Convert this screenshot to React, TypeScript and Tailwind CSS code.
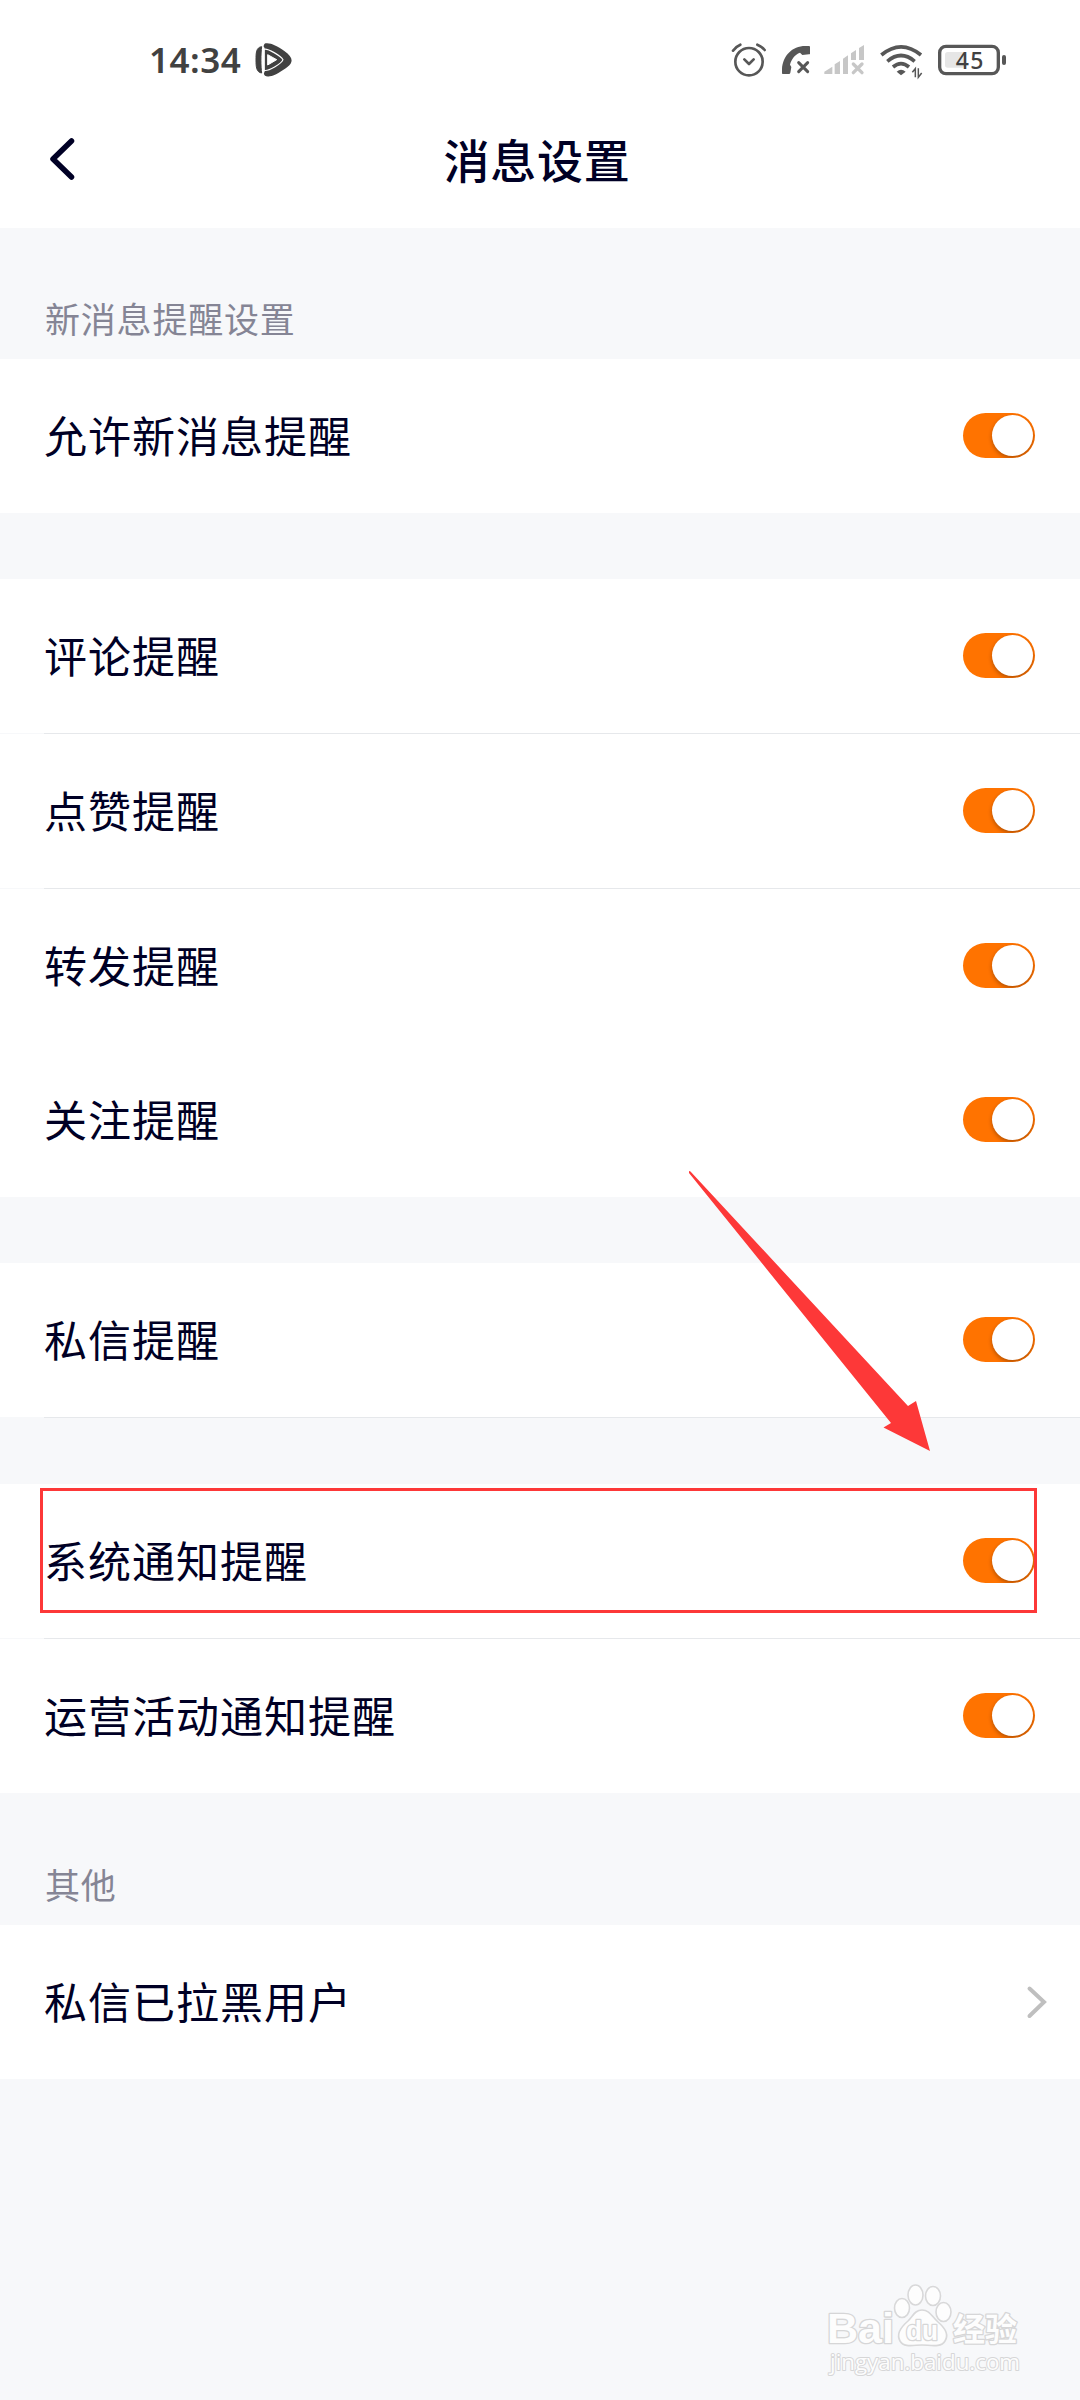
import { useState } from 'react';

const StatusBar = () => {
  return (
    <div className="flex h-[102px] justify-between pt-[40px] pr-[73px] pl-[149px]">
      <div className="flex h-[40px] items-center">
        <span className="font-['Noto_Sans'] text-[35px] leading-[40px] font-semibold tracking-[0.5px] text-[#414141]">
          14:34
        </span>
        <svg className="ml-[14px] h-[40px] w-[38px]" viewBox="0 0 114 120">
          <path
            d="M32 10 C48 8 66 18 88 33 C114 51 116 66 98 80 C80 94 60 106 44 109 C34 111 25 108 27 98 L29 96 L29 24 L26 20 C26 13 29 11 32 10 Z"
            fill="#414141"
          />
          <path d="M20 20 C3 22 3 40 3 60 C3 80 4 97 20 99 C17 80 17 42 20 20 Z" fill="#414141" stroke="#414141" strokeWidth="3" />
          <path d="M27 28 C38 24 78 48 84 59 C80 71 40 95 27 91 Z" fill="none" stroke="#fff" strokeWidth="3.5" />
          <path d="M38 44 L65 59 L38 75 Z" fill="#fff" stroke="#fff" strokeWidth="3" strokeLinejoin="round" />
        </svg>
      </div>

      <div className="flex h-[40px] items-center text-[#575757]">
        <svg className="h-[40px] w-[37px]" viewBox="0 0 111 120" fill="none" stroke="currentColor" strokeLinecap="round">
          <circle cx="57" cy="65" r="41" strokeWidth="8" />
          <path d="M43 58 L57 72 L71 58" strokeWidth="8" strokeLinejoin="round" />
          <path d="M9 32 Q17 20 31 14 M82 14 Q95 19 104 30" strokeWidth="8" />
        </svg>
        <svg className="ml-[13px] h-[40px] w-[31px]" viewBox="0 0 93 120">
          <path
            d="M8 102 Q6 102 6 99 L6 88 C8 48 36 18 76 18 L87 18 Q90 18 90 21 L90 41 Q90 43 87 43 L67 45 L60 38 C44 44 34 58 30 74 L34 81 L31 98 Q30 102 27 102 Z"
            fill="currentColor"
          />
          <path d="M56 68 L83 95 M83 68 L56 95" stroke="currentColor" strokeWidth="9" strokeLinecap="round" />
        </svg>
        <svg className="ml-[12px] h-[40px] w-[42px] text-[#c7c7c7]" viewBox="0 0 126 120" fill="currentColor">
          <path d="M4 95 L28 80 V102 H4 Z M35 73 L51 63 V102 H35 Z M60 56 L75 46 V102 H60 Z M84 40 L99 30 V60 H84 Z M108 24 L123 15 V60 H108 Z" />
          <path d="M91 72 L117 98 M117 72 L91 98" stroke="currentColor" strokeWidth="10" strokeLinecap="round" />
        </svg>
        <svg className="ml-[14px] h-[40px] w-[45px]" viewBox="0 0 135 120" fill="none" stroke="currentColor">
          <path d="M7 45 Q66 -4 126 45" strokeWidth="11" />
          <path d="M25 64 Q66 29 107 64" strokeWidth="11" />
          <path d="M42 81 Q66 61 90 81" strokeWidth="11" />
          <path d="M53 95 Q66 83 80 95 L66 106 Z" fill="currentColor" stroke="none" />
          <path d="M109 112 V86 L100 97 M118 85 V112 L128 99" strokeWidth="4.5" />
        </svg>
        <svg className="ml-[13px] h-[40px] w-[70px]" viewBox="0 0 210 120">
          <rect x="8" y="19" width="176" height="82" rx="19" fill="none" stroke="currentColor" strokeWidth="10" />
          <rect x="24" y="36" width="60" height="47" rx="8" fill="#e6e6e6" />
          <rect x="195" y="45" width="12" height="30" rx="6" fill="currentColor" />
          <text x="56" y="86" className="font-['Noto_Sans']" fontSize="69" fontWeight="500" letterSpacing="4" fill="#414141">
            45
          </text>
        </svg>
      </div>
    </div>
  );
};

const Header = () => {
  return (
    <div className="grid h-[126px] grid-cols-3 items-start pt-[34px]">
      <button type="button" className="ml-[46px] h-[48px] w-[32px] justify-self-start">
        <svg className="h-[48px] w-[32px]" viewBox="0 0 32 48" fill="none">
          <path d="M25.5 5 L7 23 L25.5 41" stroke="#000025" strokeWidth="5.5" strokeLinecap="round" strokeLinejoin="round" />
        </svg>
      </button>
      <h1 className="-mt-[3px] mr-[3px] -ml-[3px] text-center text-[46px] leading-[50px] font-medium tracking-[0.75px] whitespace-nowrap">
        消息设置
      </h1>
    </div>
  );
};

const Switch = () => {
  const [on, setOn] = useState(true);

  return (
    <button
      type="button"
      role="switch"
      aria-checked={on}
      onClick={() => setOn(!on)}
      className={`flex h-[45px] w-[72px] items-center overflow-hidden rounded-full px-[2px] ${
        on ? 'justify-end bg-[#ff7300]' : 'justify-start bg-gray-300'
      }`}
    >
      <span className="h-[41px] w-[41px] rounded-full bg-white shadow-[0_2px_4px_rgba(0,0,0,0.3)]" />
    </button>
  );
};

const Row = ({ label, link = false }: { label: string; link?: boolean }) => {
  return (
    <div className="flex h-[154px] items-center justify-between bg-white pl-[44px]">
      <span className="pb-[5px] text-[43px] leading-[64px] tracking-[1px]">{label}</span>
      {link ? (
        <svg className="mr-[32px] h-[36px] w-[22px]" viewBox="0 0 22 36" fill="none">
          <path d="M3.5 4.5 L18 18 L3.5 32" stroke="#bfbfbf" strokeWidth="4" strokeLinecap="round" />
        </svg>
      ) : (
        <div className="mr-[45px] pb-[1px]">
          <Switch />
        </div>
      )}
    </div>
  );
};

const Divider = () => <div className="ml-[44px] h-px bg-[#e6e8eb]" />;

const Caption = ({ children }: { children: string }) => {
  return <p className="px-[45px] text-[35px] leading-[48px] tracking-[0.8px] text-[#858595]">{children}</p>;
};

const Watermark = () => {
  return (
    <svg className="absolute top-[2280px] left-[822px] h-[100px] w-[206px]" viewBox="0 0 206 100">
      <g fill="#fdfdfd" stroke="#d8d8d9" strokeWidth="1.6">
        <ellipse cx="80" cy="28" rx="7.5" ry="9.5" />
        <ellipse cx="93.5" cy="15" rx="7.5" ry="10" />
        <ellipse cx="111" cy="16" rx="7.5" ry="9.5" />
        <ellipse cx="121.5" cy="32" rx="7.5" ry="9.5" />
        <path d="M100 30 C108 30 110 37 116 42 C123 48 127 55 123 61 C119 68 108 65 100 65 C92 65 82 68 78 61 C74 54 79 47 86 41 C91 36 93 30 100 30 Z" />
      </g>
      <g fill="#fdfdfd" stroke="#d6d6d7" strokeWidth="2.6" paintOrder="stroke" strokeLinejoin="round">
        <text x="5" y="63" className="font-['Liberation_Sans']" fontSize="42" fontWeight="700" textLength="67" lengthAdjust="spacingAndGlyphs">
          Bai
        </text>
        <text x="84" y="60" className="font-['Liberation_Sans']" fontSize="27" fontWeight="700" textLength="32" lengthAdjust="spacingAndGlyphs">
          du
        </text>
        <text x="131" y="61" className="font-['Noto_Sans_CJK_SC']" fontSize="32" fontWeight="700">
          经验
        </text>
        <text x="8" y="90" className="font-['Open_Sans']" fontSize="22" textLength="190" lengthAdjust="spacingAndGlyphs" strokeWidth="2">
          jingyan.baidu.com
        </text>
      </g>
    </svg>
  );
};

const App = () => {
  return (
    <div className="relative h-[2400px] w-[1080px] overflow-hidden bg-[#f7f8fa] font-['Noto_Sans_CJK_SC',sans-serif] text-[#000025]">
      <div className="h-[228px] bg-white">
        <StatusBar />
        <Header />
      </div>

      <div className="flex h-[131px] flex-col justify-end pb-[17px]">
        <Caption>新消息提醒设置</Caption>
      </div>
      <Row label="允许新消息提醒" />

      <div className="mt-[66px]">
        <Row label="评论提醒" />
        <Divider />
        <Row label="点赞提醒" />
        <Divider />
        <Row label="转发提醒" />
        <Row label="关注提醒" />
      </div>

      <div className="mt-[66px]">
        <Row label="私信提醒" />
        <Divider />
      </div>

      <div className="mt-[66px]">
        <Row label="系统通知提醒" />
        <Divider />
        <Row label="运营活动通知提醒" />
      </div>

      <div className="flex h-[132px] flex-col justify-end pb-[17px]">
        <Caption>其他</Caption>
      </div>
      <Row label="私信已拉黑用户" link />

      {/* highlight box and arrow drawn over the list */}
      <div className="pointer-events-none absolute top-[1488px] left-[40px] h-[125px] w-[997px] border-3 border-[#fd3838]" />
      <svg className="pointer-events-none absolute top-[1170px] left-[688px] h-[282px] w-[243px]" viewBox="0 0 243 282">
        <path d="M1 1 L2.5 1.5 L220 236 L228 231 L242 281 L195.5 257.5 L203 253 L1 3 Z" fill="#fd3838" />
      </svg>

      <Watermark />
    </div>
  );
};

export default App;
